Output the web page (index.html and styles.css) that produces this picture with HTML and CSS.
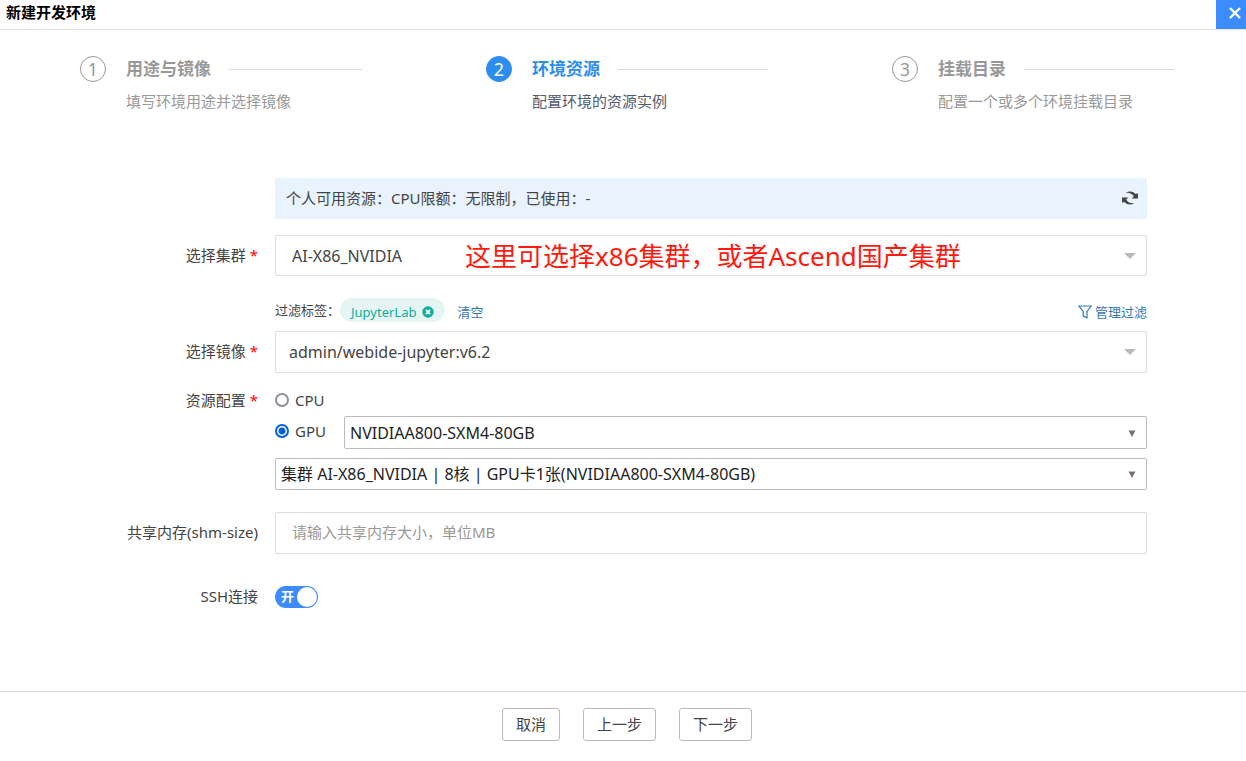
FILE: index.html
```html
<!DOCTYPE html>
<html lang="zh-CN">
<head>
<meta charset="utf-8">
<meta name="viewport" content="width=device-width, initial-scale=1">
<title>新建开发环境</title>
<link rel="stylesheet" href="styles.css">
</head>
<body>
<div class="dialog">
  <header class="dialog-header">
    <h1 class="dialog-title">新建开发环境</h1>
    <button class="close" type="button" aria-label="关闭">
      <svg width="12" height="12" viewBox="0 0 12 12"><path d="M1 1 L11 11 M11 1 L1 11" stroke="#fff" stroke-width="2.4"/></svg>
    </button>
  </header>

  <ol class="steps">
    <li class="step">
      <span class="step-number">1</span>
      <div class="step-body">
        <div class="step-title">用途与镜像</div>
        <div class="step-text">填写环境用途并选择镜像</div>
      </div>
    </li>
    <li class="step step-active">
      <span class="step-number">2</span>
      <div class="step-body">
        <div class="step-title">环境资源</div>
        <div class="step-text">配置环境的资源实例</div>
      </div>
    </li>
    <li class="step">
      <span class="step-number">3</span>
      <div class="step-body">
        <div class="step-title">挂载目录</div>
        <div class="step-text">配置一个或多个环境挂载目录</div>
      </div>
    </li>
  </ol>

  <form class="form" id="env-form">
    <div class="row">
      <div class="field quota">
        <span>个人可用资源：CPU限额：无限制，已使用：-</span>
        <button class="refresh" type="button" aria-label="刷新">
          <svg width="18" height="14" viewBox="0 0 18 14" fill="#444">
            <path d="M4.6 1.8 C8 -.4 12.2 0 14.6 2.9 L17 2.2 V7.4 H10.8 L12.8 5.2 C11 2.4 8 1.2 4.6 1.8Z"/>
            <path d="M13.4 12.2 C10 14.4 5.8 14 3.4 11.1 L1 11.8 V6.6 H7.2 L5.2 8.8 C7 11.6 10 12.8 13.4 12.2Z"/>
          </svg>
        </button>
      </div>
    </div>

    <div class="row row-cluster">
      <label class="label" for="cluster">选择集群 <span class="required">*</span></label>
      <div class="field select-box">
        <select class="control control-light" id="cluster"><option>AI-X86_NVIDIA</option></select>
        <svg class="arrow" width="12" height="6" viewBox="0 0 12 6"><path d="M0 0H12L6 6Z" fill="#bbb"/></svg>
        <p class="note">这里可选择x86集群，或者Ascend国产集群</p>
      </div>
    </div>

    <div class="row row-filter">
      <div class="field filter">
        <span>过滤标签：</span>
        <span class="tag">JupyterLab
          <button class="tag-remove" type="button" aria-label="移除 JupyterLab">
            <svg width="12" height="12" viewBox="0 0 12 12"><circle cx="6" cy="6" r="5.7" fill="#0fae9b"/><path d="M3.9 3.9 L8.1 8.1 M8.1 3.9 L3.9 8.1" stroke="#fff" stroke-width="1.8"/></svg>
          </button>
        </span>
        <a class="link" href="#clear">清空</a>
        <a class="link link-manage" href="#filters">
          <svg width="14" height="14" viewBox="0 0 14 14"><path d="M.8 1 H13.2 L9 6.4 V12.8 L5.2 11 V6.4 Z" fill="none" stroke="#337ab7" stroke-width="1.2"/></svg>
          管理过滤</a>
      </div>
    </div>

    <div class="row row-image">
      <label class="label" for="image">选择镜像 <span class="required">*</span></label>
      <div class="field select-box">
        <select class="control control-light control-image" id="image"><option>admin/webide-jupyter:v6.2</option></select>
        <svg class="arrow" width="12" height="6" viewBox="0 0 12 6"><path d="M0 0H12L6 6Z" fill="#bbb"/></svg>
      </div>
    </div>

    <div class="row row-resource" role="radiogroup" aria-labelledby="resource-label">
      <div class="label" id="resource-label">资源配置 <span class="required">*</span></div>
      <div class="field resource">
        <label class="radio"><input type="radio" name="resource" value="cpu">CPU</label>
        <div class="gpu">
          <label class="radio"><input type="radio" name="resource" value="gpu" checked>GPU</label>
          <div class="select-box gpu-model">
            <select class="control control-native" aria-label="GPU型号"><option>NVIDIAA800-SXM4-80GB</option></select>
            <svg class="arrow" width="8" height="7" viewBox="0 0 8 7"><path d="M.5 .5H7.5L4 7Z" fill="#7d6e6e"/></svg>
          </div>
        </div>
        <div class="select-box">
          <select class="control control-native" aria-label="资源实例"><option>集群 AI-X86_NVIDIA | 8核 | GPU卡1张(NVIDIAA800-SXM4-80GB)</option></select>
          <svg class="arrow" width="8" height="7" viewBox="0 0 8 7"><path d="M.5 .5H7.5L4 7Z" fill="#7d6e6e"/></svg>
        </div>
      </div>
    </div>

    <div class="row row-memory">
      <label class="label" for="shm">共享内存(shm-size)</label>
      <div class="field"><input class="control control-light control-text" id="shm" type="text" placeholder="请输入共享内存大小，单位MB"></div>
    </div>

    <div class="row row-ssh">
      <label class="label" for="ssh">SSH连接</label>
      <div class="field">
        <label class="switch"><input class="switch-input" id="ssh" type="checkbox" role="switch" checked><span class="switch-text">开</span></label>
      </div>
    </div>
  </form>

  <footer class="actions">
    <button class="button" type="button">取消</button>
    <button class="button" type="button">上一步</button>
    <button class="button" type="submit" form="env-form">下一步</button>
  </footer>
</div>
</body>
</html>
```
FILE: styles.css
```css
* {
  box-sizing: border-box;
}

body {
  margin: 0;
  background: #fff;
  color: #444;
  font-family: "Noto Sans", "Noto Sans CJK SC", sans-serif;
  font-size: 15px;
  line-height: 22px;
}

button,
input,
select {
  font: inherit;
  color: inherit;
}

.dialog {
  display: flex;
  flex-direction: column;
  min-height: 100vh;
}

.dialog-header {
  display: flex;
  justify-content: space-between;
  height: 30px;
  border-bottom: 1px solid #e5e5e5;
}

.dialog-title {
  margin: 0;
  padding: 1px 6px;
  color: #000;
  font-size: 15px;
  line-height: 22px;
}

.close {
  display: flex;
  align-items: center;
  justify-content: center;
  width: 30px;
  padding: 0 0 3px 8px;
  border: 0;
  background: #3c8cff;
}

.steps {
  display: grid;
  grid-template-columns: repeat(3, 1fr);
  gap: 124px;
  margin: 0;
  padding: 26px 72px 0 80px;
  list-style: none;
  color: #999;
}

.step {
  display: flex;
  gap: 20px;
}

.step-number {
  flex: none;
  width: 26px;
  height: 26px;
  border: 1px solid #999;
  border-radius: 50%;
  font-size: 18px;
  line-height: 24px;
  text-align: center;
}

.step-body {
  flex: 1;
  white-space: nowrap;
}

.step-title {
  display: flex;
  align-items: center;
  gap: 18px;
  font-size: 17px;
  font-weight: bold;
  line-height: 26px;
}

.step-title::after {
  content: "";
  flex: 1;
  height: 1px;
  background: #ddd;
}

.step-text {
  padding-top: 8px;
}

.step-active {
  color: #515a6e;
}

.step-active .step-number {
  border-color: #2d8cf0;
  background: #2d8cf0;
  color: #fff;
}

.step-active .step-title {
  color: #2d8cf0;
}

.form {
  flex: 1;
  padding: 66px 99px 40px 0;
}

.row {
  display: grid;
  grid-template-columns: 258px 1fr;
  column-gap: 17px;
  align-items: center;
}

.row-cluster {
  margin-top: 16px;
}

.row-filter {
  margin-top: 22px;
}

.row-image {
  margin-top: 9px;
}

.row-resource {
  align-items: start;
  margin-top: 16px;
}

.row-memory {
  margin-top: 22px;
}

.row-ssh {
  margin-top: 31px;
}

.label {
  padding-bottom: 2px;
  text-align: right;
}

.required {
  color: #f00;
}

.field {
  grid-column: 2;
  min-width: 0;
}

.quota {
  display: flex;
  align-items: center;
  justify-content: space-between;
  height: 41px;
  padding: 0 8px 1px 11px;
  background: #e8f3fe;
}

.refresh,
.tag-remove {
  display: flex;
  padding: 0;
  border: 0;
  background: none;
}

.control {
  display: block;
  width: 100%;
  border: 1px solid #ddd;
  border-radius: 2px;
  background: #fff;
  font-size: 16px;
  appearance: none;
}

.control-light {
  height: 42px;
  padding: 0 16px;
}

.row-cluster .control-light {
  height: 41px;
}

.control-light.control-image {
  padding: 0 13px;
}

.control-text {
  padding-bottom: 2px;
  font-size: 15px;
}

.control-native {
  height: 32px;
  padding: 0 5px;
  border-color: #bbb;
  color: #222;
}

.gpu-model .control-native {
  height: 33px;
}

.control::placeholder {
  color: #999;
  opacity: 1;
}

.select-box {
  position: relative;
}

.arrow {
  position: absolute;
  top: calc(50% - 3px);
  right: 11px;
  pointer-events: none;
}

.note {
  position: absolute;
  top: 0;
  left: 190px;
  margin: 0;
  color: #ff1a0f;
  font-size: 26px;
  line-height: 42px;
  white-space: nowrap;
  pointer-events: none;
}

.filter {
  display: flex;
  align-items: center;
  height: 24px;
  font-size: 13px;
}

.tag {
  display: flex;
  align-items: center;
  gap: 6px;
  height: 24px;
  padding: 3px 11px 0;
  border-radius: 12px;
  background: #e5f5f3;
  color: #0fae9b;
}

.link {
  display: flex;
  align-items: center;
  gap: 3px;
  padding-top: 3px;
  margin-left: 12px;
  color: #337ab7;
  text-decoration: none;
}

.link-manage {
  margin-left: auto;
}

.resource {
  display: grid;
  row-gap: 9px;
}

.radio {
  display: flex;
  align-items: center;
  gap: 6px;
}

.radio input {
  width: 14px;
  height: 14px;
  margin: 0;
  border: 2px solid #8f8f9d;
  border-radius: 50%;
  background: #fff;
  appearance: none;
}

.radio input:checked {
  border-color: #0060df;
  background: radial-gradient(circle, #0060df 3px, #fff 4px);
}

.gpu {
  display: flex;
  align-items: center;
  gap: 18px;
  margin-top: -4px;
}

.gpu .radio {
  padding-bottom: 4px;
}

.gpu-model {
  flex: 1;
}

.switch {
  display: inline-flex;
  position: relative;
  vertical-align: top;
}

.switch-input {
  width: 43px;
  height: 22px;
  margin: 0;
  border-radius: 11px;
  background: #3c8cff;
  appearance: none;
}

.switch-input::before {
  content: "";
  display: block;
  width: 20px;
  height: 20px;
  margin: 1px;
  border-radius: 50%;
  background: #fff;
}

.switch-input:checked::before {
  margin-left: 22px;
}

.switch-text {
  position: absolute;
  top: 0;
  left: 6px;
  color: #fff;
  font-size: 13px;
  font-weight: bold;
  line-height: 20px;
}

.actions {
  display: flex;
  justify-content: center;
  gap: 23px;
  padding: 16px 0 20px 8px;
  border-top: 1px solid #d5d5d5;
}

.button {
  height: 33px;
  padding: 0 13px 2px;
  border: 1px solid #bbb;
  border-radius: 3px;
  background: #fff;
}
```
